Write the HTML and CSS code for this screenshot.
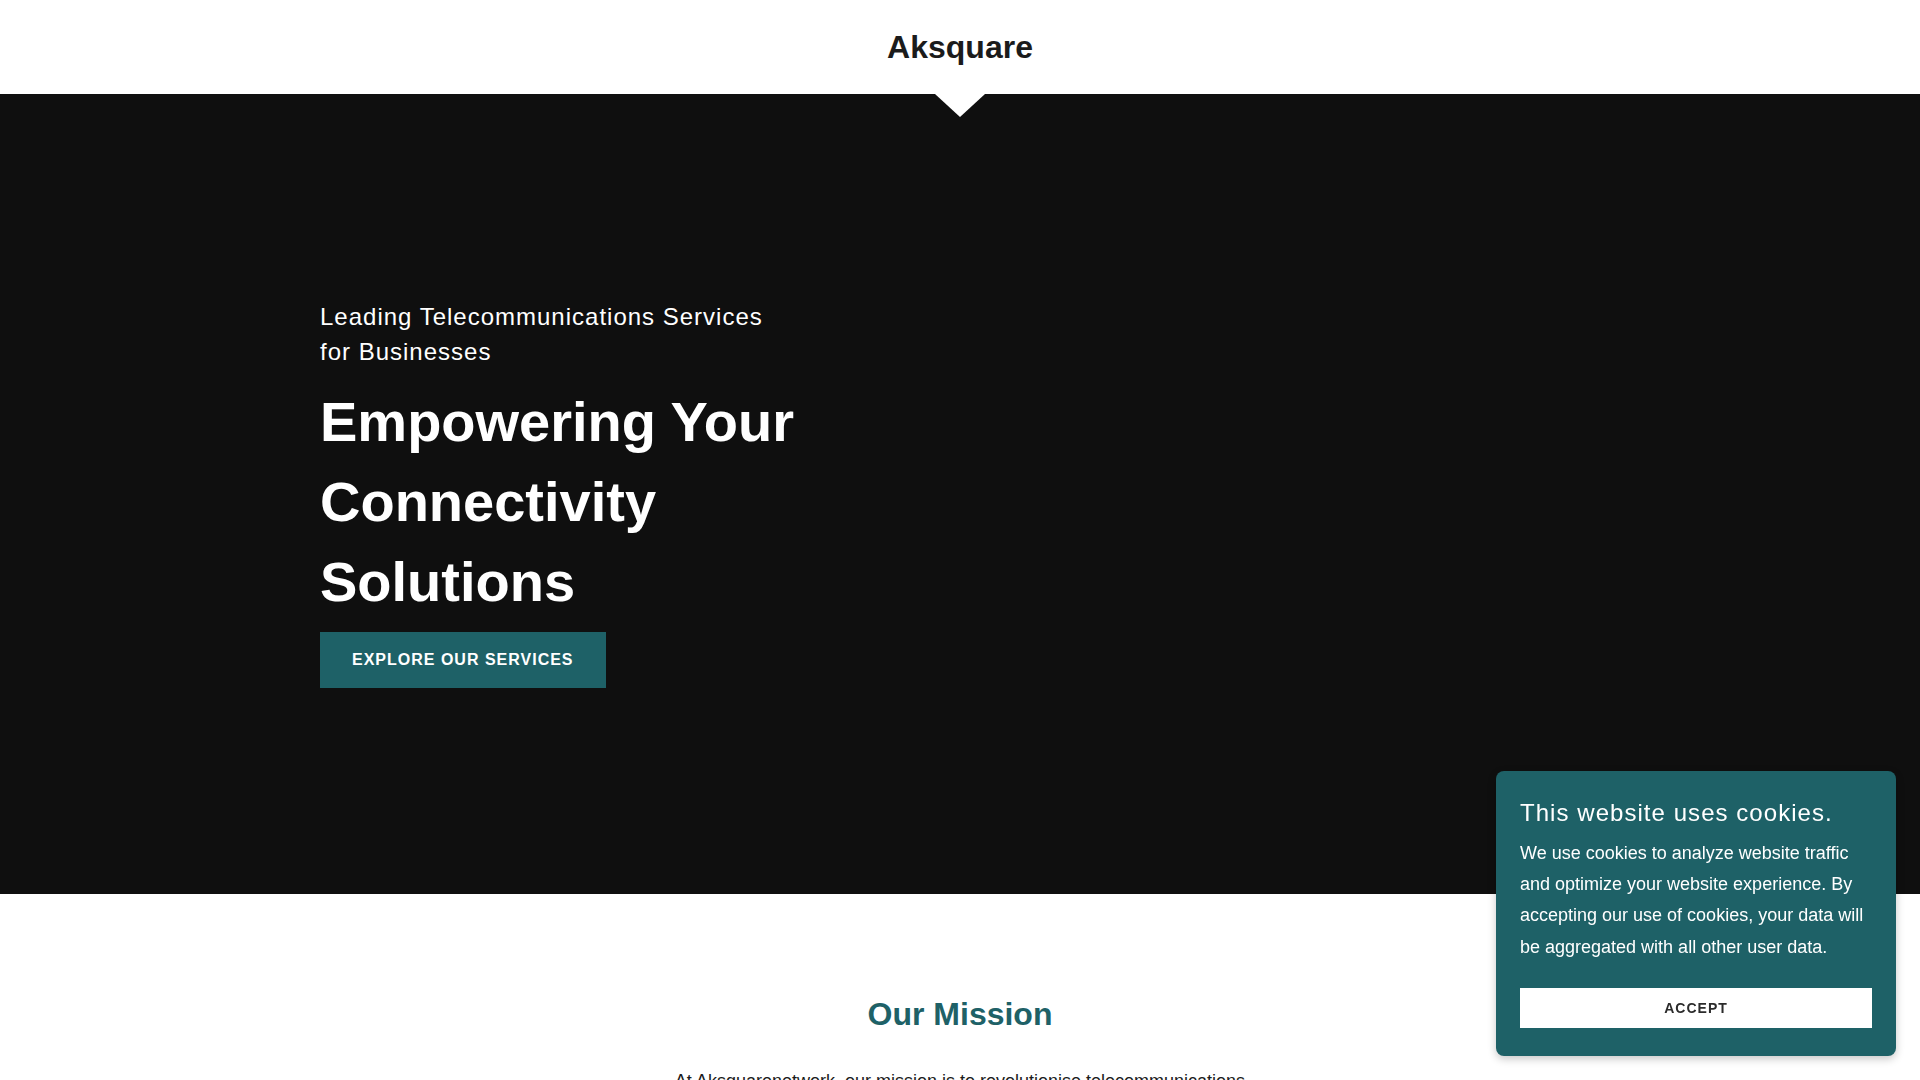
FILE: index.html
```html
<!DOCTYPE html>
<html lang="en">
<head>
<meta charset="utf-8">
<title>Aksquare</title>
<link rel="stylesheet" href="styles.css">
</head>
<body>
<header class="site-header">
  <h1 class="logo">Aksquare</h1>
</header>
<section class="hero">
  <div class="hero-inner">
    <p class="hero-tagline">Leading Telecommunications Services for Businesses</p>
    <h2 class="hero-title">Empowering Your Connectivity Solutions</h2>
    <a class="hero-button" href="#services">Explore Our Services</a>
  </div>
</section>
<section class="mission">
  <h2 class="mission-title">Our Mission</h2>
  <p class="mission-text">At Aksquarenetwork, our mission is to revolutionise telecommunications by delivering reliable, innovative and affordable connectivity solutions to businesses of every size.</p>
</section>
<div class="cookie-banner">
  <h3 class="cookie-title">This website uses cookies.</h3>
  <p class="cookie-text">We use cookies to analyze website traffic and optimize your website experience. By accepting our use of cookies, your data will be aggregated with all other user data.</p>
  <button class="cookie-accept" type="button">Accept</button>
</div>
</body>
</html>
```
FILE: styles.css
```css
html {
  scrollbar-width: none;
}
html::-webkit-scrollbar {
  display: none;
}
* {
  box-sizing: border-box;
}
body {
  margin: 0;
  font-family: "Liberation Sans", Arial, sans-serif;
  color: #1b1b1b;
  background: #ffffff;
}
.site-header {
  position: relative;
  height: 94px;
  display: flex;
  align-items: center;
  justify-content: center;
  background: #ffffff;
  z-index: 2;
}
.site-header::after {
  content: "";
  position: absolute;
  left: 50%;
  top: 94px;
  margin-left: -25px;
  width: 0;
  height: 0;
  border-left: 25px solid transparent;
  border-right: 25px solid transparent;
  border-top: 23px solid #ffffff;
}
.logo {
  margin: 0;
  font-size: 32px;
  font-weight: 700;
  letter-spacing: 0;
  line-height: 1.2;
  color: #1b1b1b;
}
.hero {
  height: 800px;
  padding-top: 205px;
  background: #0f0f0f;
  display: flex;
  align-items: flex-start;
}
.hero-inner {
  width: 1280px;
  margin: 0 auto;
}
.hero-tagline {
  margin: 0;
  max-width: 460px;
  font-size: 24px;
  line-height: 35px;
  letter-spacing: 1px;
  color: #ffffff;
}
.hero-title {
  margin: 13px 0 10px;
  max-width: 500px;
  font-size: 56px;
  line-height: 80px;
  font-weight: 700;
  color: #ffffff;
}
.hero-button {
  display: inline-block;
  height: 56px;
  line-height: 56px;
  padding: 0 32px;
  background: #1e6167;
  color: #ffffff;
  font-size: 16px;
  font-weight: 700;
  letter-spacing: 1px;
  text-transform: uppercase;
  text-decoration: none;
}
.mission {
  padding: 100px 0 40px;
  text-align: center;
}
.mission-title {
  margin: 0;
  font-size: 32px;
  line-height: 40px;
  font-weight: 700;
  color: #1e6167;
}
.mission-text {
  margin: 32px auto 0;
  max-width: 580px;
  font-size: 18px;
  line-height: 31.5px;
  color: #1b1b1b;
}
.cookie-banner {
  position: fixed;
  right: 24px;
  bottom: 24px;
  width: 400px;
  padding: 25px 24px 28px;
  background: #1e6167;
  border-radius: 8px;
  box-shadow: 0 3px 8px rgba(0, 0, 0, 0.22);
  color: #ffffff;
  z-index: 10;
}
.cookie-title {
  margin: 0;
  font-size: 24px;
  line-height: 33px;
  font-weight: 400;
  letter-spacing: 1.05px;
}
.cookie-text {
  margin: 9px 0 0;
  font-size: 18px;
  line-height: 31.3px;
}
.cookie-accept {
  display: block;
  width: 100%;
  height: 40px;
  margin-top: 25px;
  border: 0;
  padding: 0;
  background: #ffffff;
  color: #2b2b2b;
  font-family: "Liberation Sans", Arial, sans-serif;
  font-size: 14px;
  font-weight: 700;
  letter-spacing: 1px;
  text-transform: uppercase;
  cursor: pointer;
}
```
